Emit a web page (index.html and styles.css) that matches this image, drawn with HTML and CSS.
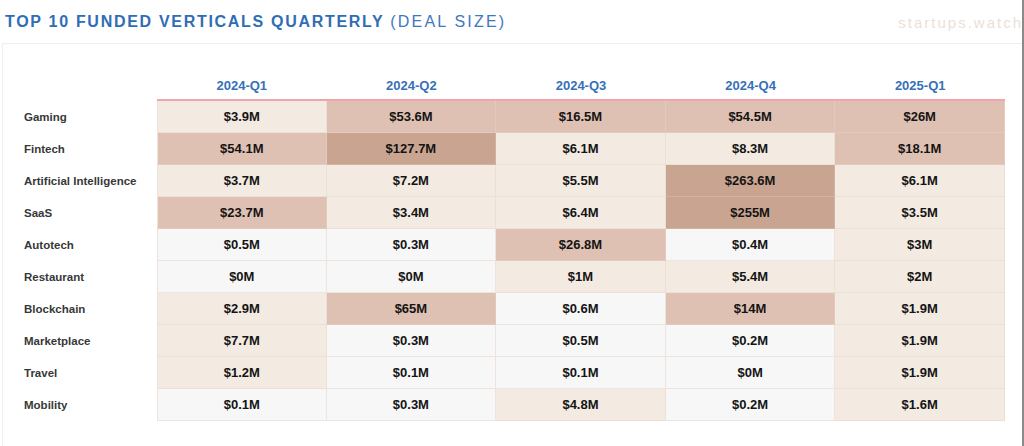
FILE: index.html
```html
<!DOCTYPE html>
<html lang="en">
<head>
<meta charset="utf-8">
<title>Top 10 Funded Verticals Quarterly</title>
<link rel="stylesheet" href="styles.css">
</head>
<body>
<div class="page">
  <header class="top">
    <h1 class="title"><span class="title-strong">TOP 10 FUNDED VERTICALS QUARTERLY</span> <span class="title-light">(DEAL SIZE)</span></h1>
    <div class="brand">startups.watch</div>
  </header>
  <section class="panel">
    <table class="heat">
      <colgroup>
        <col class="col-label">
        <col><col><col><col><col>
      </colgroup>
      <thead>
        <tr>
          <th class="corner"></th>
          <th class="q">2024-Q1</th>
          <th class="q">2024-Q2</th>
          <th class="q">2024-Q3</th>
          <th class="q">2024-Q4</th>
          <th class="q">2025-Q1</th>
        </tr>
      </thead>
      <tbody>
        <tr><td class="label">Gaming</td><td class="v l1">$3.9M</td><td class="v l2">$53.6M</td><td class="v l2">$16.5M</td><td class="v l2">$54.5M</td><td class="v l2">$26M</td></tr>
        <tr><td class="label">Fintech</td><td class="v l2">$54.1M</td><td class="v l3">$127.7M</td><td class="v l1">$6.1M</td><td class="v l1">$8.3M</td><td class="v l2">$18.1M</td></tr>
        <tr><td class="label">Artificial Intelligence</td><td class="v l1">$3.7M</td><td class="v l1">$7.2M</td><td class="v l1">$5.5M</td><td class="v l3">$263.6M</td><td class="v l1">$6.1M</td></tr>
        <tr><td class="label">SaaS</td><td class="v l2">$23.7M</td><td class="v l1">$3.4M</td><td class="v l1">$6.4M</td><td class="v l3">$255M</td><td class="v l1">$3.5M</td></tr>
        <tr><td class="label">Autotech</td><td class="v l0">$0.5M</td><td class="v l0">$0.3M</td><td class="v l2">$26.8M</td><td class="v l0">$0.4M</td><td class="v l1">$3M</td></tr>
        <tr><td class="label">Restaurant</td><td class="v l0">$0M</td><td class="v l0">$0M</td><td class="v l1">$1M</td><td class="v l1">$5.4M</td><td class="v l1">$2M</td></tr>
        <tr><td class="label">Blockchain</td><td class="v l1">$2.9M</td><td class="v l2">$65M</td><td class="v l0">$0.6M</td><td class="v l2">$14M</td><td class="v l1">$1.9M</td></tr>
        <tr><td class="label">Marketplace</td><td class="v l1">$7.7M</td><td class="v l0">$0.3M</td><td class="v l0">$0.5M</td><td class="v l0">$0.2M</td><td class="v l1">$1.9M</td></tr>
        <tr><td class="label">Travel</td><td class="v l1">$1.2M</td><td class="v l0">$0.1M</td><td class="v l0">$0.1M</td><td class="v l0">$0M</td><td class="v l1">$1.9M</td></tr>
        <tr><td class="label">Mobility</td><td class="v l0">$0.1M</td><td class="v l0">$0.3M</td><td class="v l1">$4.8M</td><td class="v l0">$0.2M</td><td class="v l1">$1.6M</td></tr>
      </tbody>
    </table>
  </section>
</div>
</body>
</html>
```

FILE: styles.css
```css
html, body {
  margin: 0;
  padding: 0;
  background: #ffffff;
}

body {
  font-family: "Liberation Sans", Arial, Helvetica, sans-serif;
}

.page {
  width: 1022px;
  height: 446px;
  overflow: hidden;
  border-right: 2px solid #8a8a8a;
  background: #ffffff;
}

.top {
  height: 43px;
  display: flex;
  justify-content: space-between;
  align-items: flex-start;
  padding-left: 5px;
  box-sizing: border-box;
}

.title {
  margin: 0;
  padding-top: 12px;
  font-size: 16px;
  line-height: 20px;
  letter-spacing: 1.7px;
  color: #2f6db5;
  white-space: nowrap;
}

.title-strong {
  font-weight: 700;
}

.title-light {
  font-weight: 400;
  letter-spacing: 2.2px;
  color: #3d78bd;
}

.brand {
  padding-top: 13px;
  font-size: 15px;
  line-height: 20px;
  letter-spacing: 2px;
  color: #ecdfd7;
  margin-right: -1px;
}

.panel {
  margin-left: 2px;
  border-top: 1px solid #efefef;
  border-left: 1px solid #f0f0f0;
  padding: 27px 17px 0 21px;
  height: 420px;
  box-sizing: border-box;
}

.heat {
  width: 981px;
  table-layout: fixed;
  border-collapse: separate;
  border-spacing: 0;
}

.col-label {
  width: 133px;
}

.heat th {
  height: 30px;
  box-sizing: border-box;
  padding: 0;
  font-size: 13px;
  font-weight: 700;
  color: #3670b6;
  text-align: center;
  vertical-align: middle;
}

.heat th.q {
  border-bottom: 2px solid #f0a4ac;
  padding-bottom: 0;
}

.heat td {
  height: 32px;
  box-sizing: border-box;
  padding: 0;
  vertical-align: middle;
}

.label {
  font-size: 11.5px;
  font-weight: 700;
  color: #383838;
  text-align: left;
  white-space: nowrap;
}

.v {
  text-align: center;
  font-size: 13px;
  font-weight: 700;
  color: #141414;
  border-right: 1px solid #eee1d9;
  border-bottom: 1px solid #eee1d9;
}

.label + .v {
  border-left: 1px solid #eee1d9;
}

.l0 {
  background: #f7f7f7;
  border-color: #efe4dd;
}

.l1 {
  background: #f3ebe2;
  border-color: #ecdfd6;
}

.l2 {
  background: #dfc1b3;
  border-color: #e3cabe;
}

.l3 {
  background: #c9a591;
  border-color: #d2b2a2;
}
```
